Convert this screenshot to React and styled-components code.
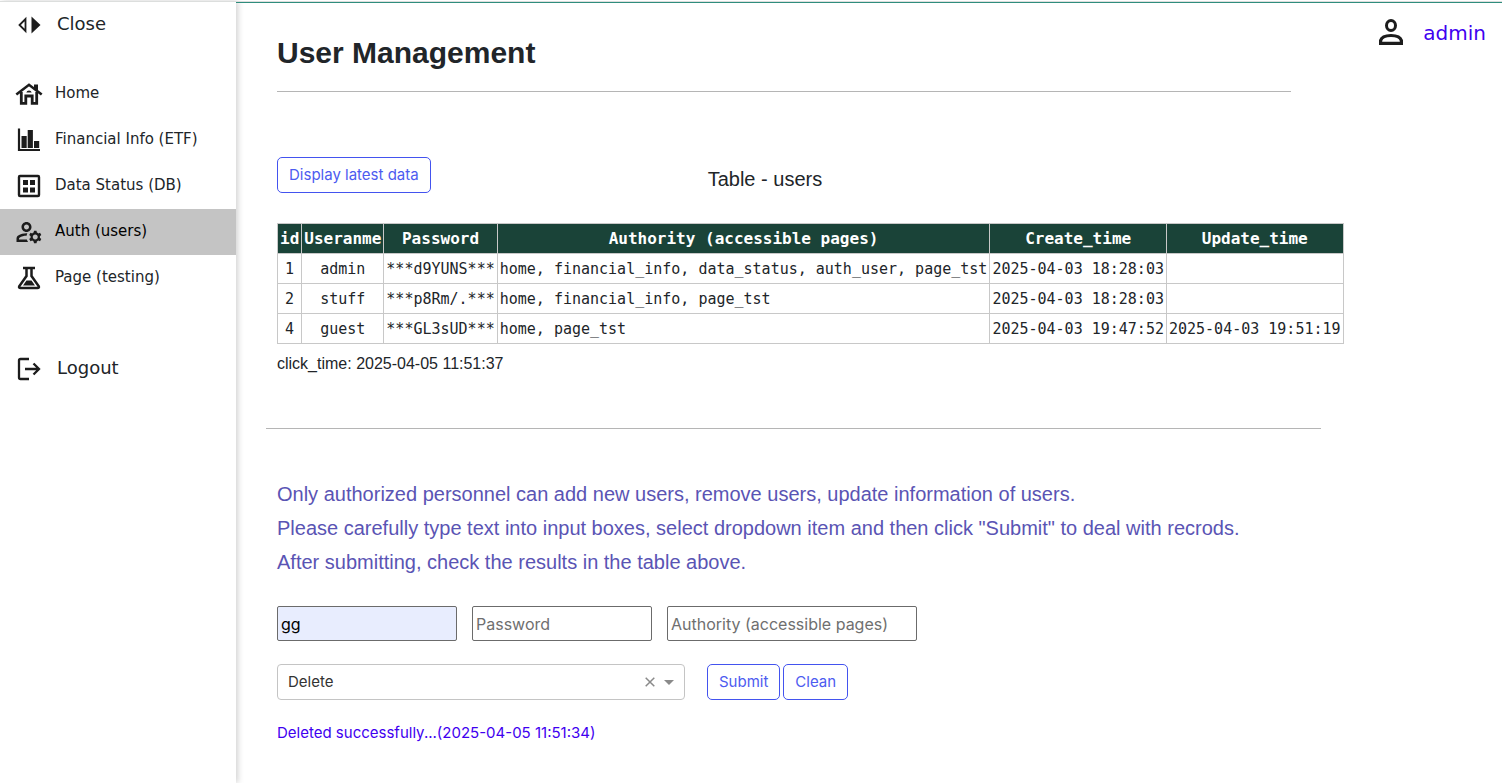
import React, { useState } from 'react';
import styled, { createGlobalStyle } from 'styled-components';
import { MdOutlineManageAccounts } from 'react-icons/md';

const sans = '"Liberation Sans", Arial, sans-serif';
const ui = 'Inter, "Liberation Sans", sans-serif';
const wide = '"DejaVu Sans", Verdana, sans-serif';
const mono = '"DejaVu Sans Mono", Menlo, monospace';

const GlobalStyle = createGlobalStyle`
  * { box-sizing: border-box; }
  body { margin: 0; background: #fff; color: #212529; font-family: ${sans}; }
`;

const Page = styled.div`
  display: flex;
  min-height: 100vh;
  padding-top: 1px;
`;

const Sidebar = styled.nav`
  flex: 0 0 236px;
  border-top: 1px solid #dcdedd;
  box-shadow: 2px 0 6px rgba(0, 0, 0, 0.18);
  font-family: ${wide};
`;

const SideLink = styled.a`
  display: flex;
  align-items: center;
  gap: ${(p) => (p.$large ? 15 : 13)}px;
  height: 46px;
  padding: 0 16px 2px;
  background: ${(p) => (p.$active ? '#c4c4c4' : 'transparent')};
  color: ${(p) => (p.$active ? '#000' : '#212529')};
  font-size: ${(p) => (p.$large ? 18 : 15)}px;
  line-height: 20px;
  text-decoration: none;
  white-space: nowrap;

  svg {
    flex: none;
    color: #1c1c1c;
    margin-top: 1px;
    overflow: visible;
  }
`;

const AccountsIcon = styled(MdOutlineManageAccounts)`
  width: 30px;
  height: 30px;
  margin: 0 -2px;
`;

const SideList = styled.div`
  padding: 23px 0 45px;
`;

const Main = styled.main`
  flex: 1;
  min-width: 0;
  display: flex;
  align-items: flex-start;
  justify-content: space-between;
  border-top: 1px solid #dcdedd;
  box-shadow: inset 0 1px #2f8d7d;
  padding: 1px 16px 0 30px;
`;

const Content = styled.div`
  flex: 0 1 1055px;
  min-width: 0;
`;

const Section = styled.section`
  padding: ${(p) => p.$top}px 30px 0 11px;
`;

const Title = styled.h1`
  margin: 0;
  font-size: 30px;
  line-height: 36px;
`;

const Rule = styled.hr`
  height: 1px;
  margin: ${(p) => p.$top}px 0 0;
  border: 0;
  background: #b5b5b5;
`;

const TableBar = styled.div`
  display: flex;
  align-items: center;
  gap: 277px;
  margin: 65px 0 30px;
`;

const TableTitle = styled.h2`
  margin: 8px 0 0;
  font-size: 20px;
  font-weight: 400;
  line-height: 24px;
  white-space: nowrap;
`;

const Button = styled.button`
  height: 36px;
  padding: 0 11px;
  border: 1px solid #4353ef;
  border-radius: 5px;
  background: #fff;
  color: #4d5bf0;
  font: 15px/20px ${ui};
  white-space: nowrap;
  cursor: pointer;
`;

const Table = styled.table`
  border-collapse: collapse;
  font: 15px/20px ${mono};
  white-space: nowrap;

  th, td {
    height: 30px;
    padding: 0 2px;
    border: 1px solid #c8c8c8;
    text-align: center;
  }
  th {
    background: #1a4338;
    color: #fff;
    font-size: 16px;
  }
  td:nth-child(4) {
    text-align: left;
  }
`;

const ClickTime = styled.p`
  margin: 10px 0 0;
  font-size: 16px;
  line-height: 20px;
`;

const Notice = styled.p`
  margin: 0;
  color: #5a54b4;
  font-size: 20px;
  line-height: 34px;
`;

const Row = styled.div`
  display: flex;
  gap: ${(p) => p.$gap}px;
  margin-top: ${(p) => p.$top}px;
`;

const Field = styled.input`
  width: ${(p) => p.$width}px;
  height: 35px;
  padding: 0 3px;
  border: 1px solid #6b6b6b;
  border-radius: 2px;
  background: ${(p) => (p.$filled ? '#e8edfe' : '#fff')};
  color: #000;
  font: 16px/20px ${ui};

  &::placeholder { color: #6f6f6f; }
`;

const SelectBox = styled.div`
  display: flex;
  align-items: center;
  width: 408px;
  height: 36px;
  margin-right: 19px;
  padding-right: 10px;
  border: 1px solid #c4c4c4;
  border-radius: 4px;
  color: #8a8a8a;
`;

const Select = styled.select`
  flex: 1;
  height: 100%;
  padding: 0 10px;
  border: 0;
  appearance: none;
  background: transparent;
  color: #333;
  font: 15px/20px ${ui};
`;

const ClearButton = styled.button`
  display: flex;
  margin-right: 9px;
  padding: 0;
  border: 0;
  background: none;
  color: inherit;
`;

const Message = styled.p`
  margin: 23px 0 0;
  color: #4000f0;
  font: 15px/20px ${ui};
`;

const User = styled.a`
  display: flex;
  align-items: center;
  gap: 20px;
  margin-top: 16px;
  color: #4000f0;
  font: 20px/28px ${wide};
  text-decoration: none;

  svg { color: #1c1c1c; }
`;

const Icon = ({ width = 26, height = 26, children }) => (
  <svg width={width} height={height} viewBox={`0 0 ${width} ${height}`} fill="none" stroke="currentColor" strokeWidth="2" aria-hidden="true">
    {children}
  </svg>
);

const CloseIcon = () => (
  <Icon>
    <path d="M9.500 7v12L3.500 13z" strokeWidth="1.800" />
    <path d="M15.500 4.500v17l9-8.500z" fill="currentColor" stroke="none" />
  </Icon>
);

const HomeIcon = () => (
  <Icon>
    <path d="M0.300 13.500 13 3.800l12.700 9.700" strokeWidth="2.600" />
    <path d="M5.300 11v11.300h4.500V15h6.400v7.300h4.500V11" strokeWidth="2.800" />
    <path d="M18 3.500h4v7l-4-3z" fill="currentColor" stroke="none" />
    <path d="M10.300 11.500a2.800 2.800 0 0 1 5.400 0z" fill="currentColor" stroke="none" />
  </Icon>
);

const ChartIcon = () => (
  <Icon>
    <path d="M3 1.500V23h21" strokeWidth="2.200" />
    <path d="M5.500 9h5.200v12H5.500zM11.700 3h5.200v18h-5.200zM18 14h5.200v7H18z" fill="currentColor" stroke="none" />
  </Icon>
);

const GridIcon = () => (
  <Icon>
    <rect x="3" y="3" width="20" height="20" rx="1" strokeWidth="2.400" />
    <path d="M7 7h5v5H7zM14 7h5v5h-5zM7 14.500h5v5H7zM14 14.500h5v5h-5z" fill="currentColor" stroke="none" />
  </Icon>
);

const FlaskIcon = () => (
  <Icon>
    <path d="M7 3h12M10.500 3v8L3.200 21.300Q2.500 23 4.500 23h17q2 0 1.300-1.700L15.500 11V3" strokeWidth="2.500" />
    <path d="M7 20.500 10.500 15.500h5L19 20.500z" fill="currentColor" stroke="none" />
  </Icon>
);

const LogoutIcon = () => (
  <Icon>
    <path d="M13 3H4.500Q3 3 3 4.500v17Q3 23 4.500 23H13M9 13h14M17.500 7.500l5.500 5.500-5.500 5.500" strokeWidth="2.300" />
  </Icon>
);

const PersonIcon = () => (
  <Icon width={24} height={28}>
    <ellipse cx="12" cy="6.500" rx="4.500" ry="5" strokeWidth="3" />
    <path d="M1.600 24.400V21.500Q3 16.500 12 16.500t10.400 5v2.900z" strokeWidth="3.200" />
  </Icon>
);

const links = [
  { label: 'Home', icon: <HomeIcon /> },
  { label: 'Financial Info (ETF)', icon: <ChartIcon /> },
  { label: 'Data Status (DB)', icon: <GridIcon /> },
  { label: 'Auth (users)', icon: <AccountsIcon />, active: true },
  { label: 'Page (testing)', icon: <FlaskIcon /> },
];

const columns = ['id', 'Useranme', 'Password', 'Authority (accessible pages)', 'Create_time', 'Update_time'];

const users = [
  ['1', 'admin', '***d9YUNS***', 'home, financial_info, data_status, auth_user, page_tst', '2025-04-03 18:28:03', ''],
  ['2', 'stuff', '***p8Rm/.***', 'home, financial_info, page_tst', '2025-04-03 18:28:03', ''],
  ['4', 'guest', '***GL3sUD***', 'home, page_tst', '2025-04-03 19:47:52', '2025-04-03 19:51:19'],
];

export default function App() {
  const [action, setAction] = useState('Delete');
  return (
    <>
      <GlobalStyle />
      <Page>
        <Sidebar>
          <SideLink href="#close" $large><CloseIcon />Close</SideLink>
          <SideList>
            {links.map((l) => (
              <SideLink key={l.label} href="#page" $active={l.active}>{l.icon}{l.label}</SideLink>
            ))}
          </SideList>
          <SideLink href="#logout" $large><LogoutIcon />Logout</SideLink>
        </Sidebar>
        <Main>
          <Content>
            <Section $top={32}>
              <Title>User Management</Title>
              <Rule $top={20} />
              <TableBar>
                <Button type="button">Display latest data</Button>
                <TableTitle>Table - users</TableTitle>
              </TableBar>
              <Table>
                <thead>
                  <tr>{columns.map((c) => <th key={c} scope="col">{c}</th>)}</tr>
                </thead>
                <tbody>
                  {users.map((u) => (
                    <tr key={u[0]}>{u.map((v, i) => <td key={columns[i]}>{v}</td>)}</tr>
                  ))}
                </tbody>
              </Table>
              <ClickTime>click_time: 2025-04-05 11:51:37</ClickTime>
            </Section>
            <Rule $top={54} />
            <Section $top={48}>
              <Notice>Only authorized personnel can add new users, remove users, update information of users.</Notice>
              <Notice>Please carefully type text into input boxes, select dropdown item and then click "Submit" to deal with recrods.</Notice>
              <Notice>After submitting, check the results in the table above.</Notice>
              <Row $top={27} $gap={15}>
                <Field aria-label="Username" $width={180} $filled defaultValue="gg" />
                <Field aria-label="Password" $width={180} placeholder="Password" />
                <Field aria-label="Authority" $width={250} placeholder="Authority (accessible pages)" />
              </Row>
              <Row $top={23} $gap={3}>
                <SelectBox>
                  <Select aria-label="Action" value={action} onChange={(e) => setAction(e.target.value)}>
                    <option value="" />
                    <option>Add</option>
                    <option>Update</option>
                    <option>Delete</option>
                  </Select>
                  <ClearButton type="button" aria-label="Clear selection" onClick={() => setAction('')}>
                    <Icon width={10} height={10}><path d="M0.700 0.700l8.600 8.600M9.300 0.700l-8.600 8.600" strokeWidth="1.500" /></Icon>
                  </ClearButton>
                  <Icon width={10} height={5}><path d="M0 0h10L5 5z" fill="currentColor" stroke="none" /></Icon>
                </SelectBox>
                <Button type="button">Submit</Button>
                <Button type="button">Clean</Button>
              </Row>
              <Message>Deleted successfully...(2025-04-05 11:51:34)</Message>
            </Section>
          </Content>
          <User href="#admin"><PersonIcon />admin</User>
        </Main>
      </Page>
    </>
  );
}
